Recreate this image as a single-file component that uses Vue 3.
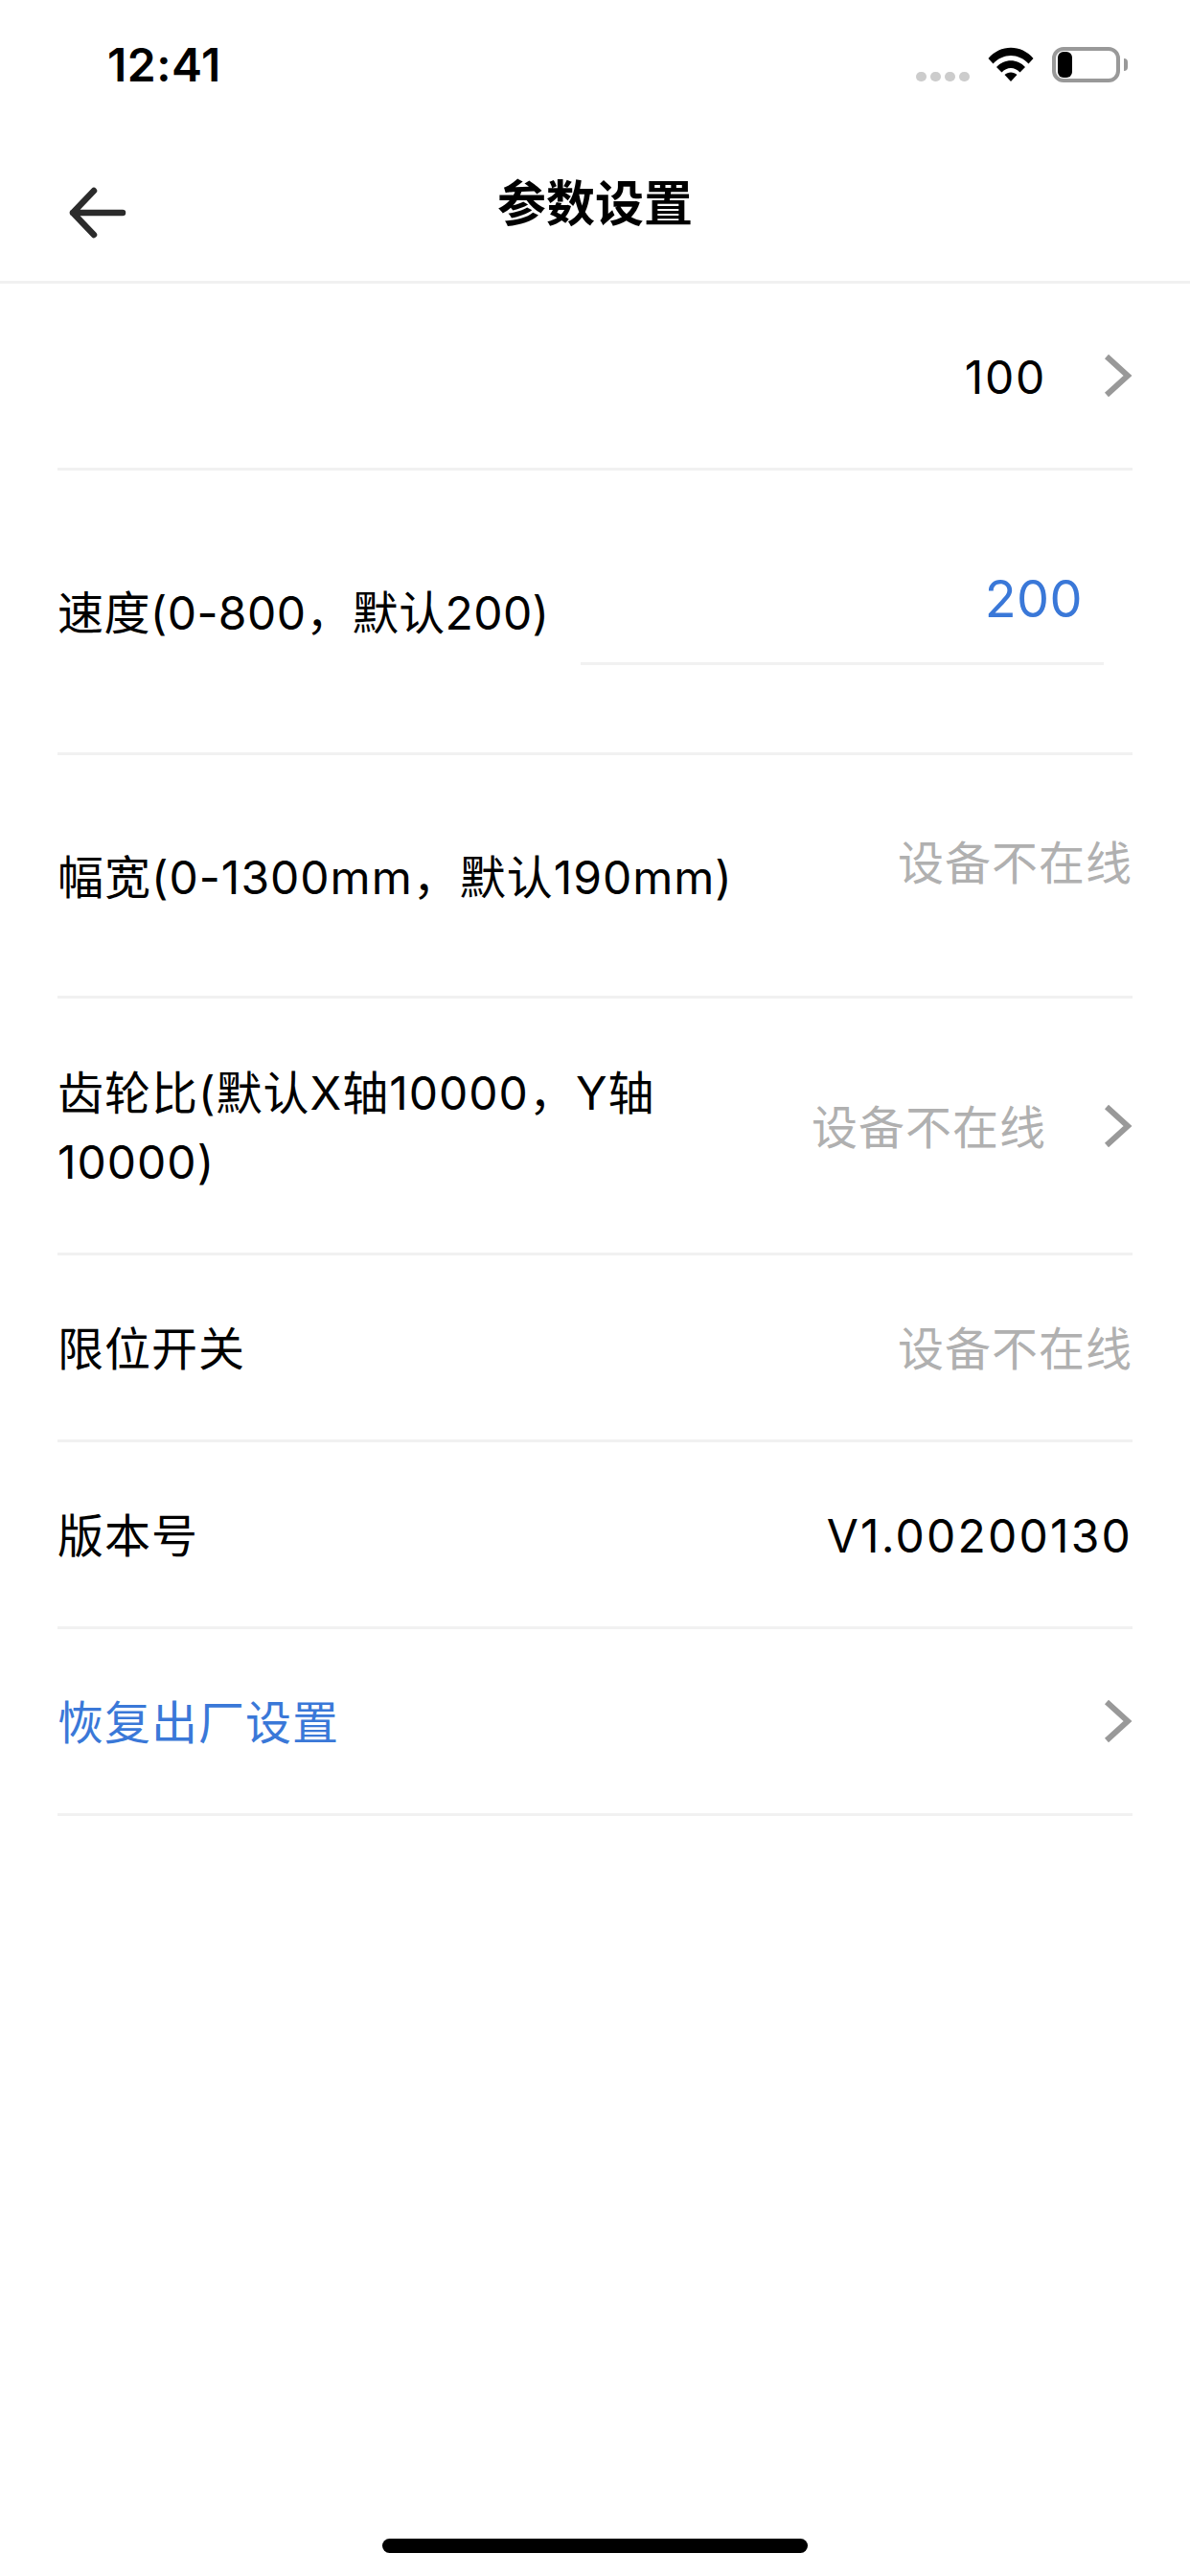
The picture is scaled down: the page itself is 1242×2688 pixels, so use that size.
<template>
  <div class="page">
    <div class="status">
      <span class="time">12:41</span>
      <div class="status-icons">
        <div class="dots"><i></i><i></i><i></i><i></i></div>
        <svg class="wifi" width="48" height="36" viewBox="0 0 48 36">
          <path d="M0.5 12 C 13 -3, 35 -3, 47.5 12 L 42.5 17.5 C 32 6, 16 6, 5.5 17.5 Z" fill="#000" />
          <path d="M9 21 C 17 12, 31 12, 39 21 L 33.5 26.5 C 28 20.5, 20 20.5, 14.5 26.5 Z" fill="#000" />
          <path d="M17.5 29 C 21 25.5, 27 25.5, 30.5 29 L 24 36 Z" fill="#000" />
        </svg>
        <div class="battery"><div class="battery-fill"></div></div>
        <div class="battery-nub"></div>
      </div>
    </div>

    <div class="nav">
      <svg class="back" width="64" height="64" viewBox="0 0 64 64">
        <path d="M28 9 L6 32 L28 55 M6 32 H58" fill="none" stroke="#2b2b2b" stroke-width="6.5" stroke-linecap="round" stroke-linejoin="round" />
      </svg>
      <span class="title">参数设置</span>
    </div>

    <div class="list">
      <div v-for="row in rows" :key="row.id" class="row" :class="row.id">
        <div v-if="row.label" class="label" :class="{ link: row.link }">{{ row.label }}</div>
        <div v-if="row.input" class="input-box"><span>{{ row.input }}</span></div>
        <div v-if="row.value" class="value" :class="{ off: row.off, raised: row.raised }">{{ row.value }}</div>
        <svg v-if="row.arrow" class="chevron" width="30" height="48" viewBox="0 0 30 48">
          <path d="M3 4 L25 24 L3 44" fill="none" stroke="#999" stroke-width="6" />
        </svg>
      </div>
    </div>

    <div class="home-bar"></div>
  </div>
</template>

<script setup>
const rows = [
  { id: 'r-accel', value: '100', arrow: true },
  { id: 'r-speed', label: '速度(0-800，默认200)', input: '200' },
  { id: 'r-width', label: '幅宽(0-1300mm，默认190mm)', value: '设备不在线', off: true, raised: true },
  { id: 'r-gear', label: '齿轮比(默认X轴10000，Y轴10000)', value: '设备不在线', off: true, arrow: true },
  { id: 'r-limit', label: '限位开关', value: '设备不在线', off: true },
  { id: 'r-version', label: '版本号', value: 'V1.00200130' },
  { id: 'r-reset', label: '恢复出厂设置', link: true, arrow: true }
]
</script>

<style>
html, body { margin: 0; background: #fff; }
</style>

<style scoped>
.page {
  width: 1242px;
  height: 2688px;
  background: #fff;
  display: flex;
  flex-direction: column;
  position: relative;
  overflow: hidden;
  font-family: Inter, "Noto Sans CJK SC", sans-serif;
  color: #000;
}
.status {
  height: 132px;
  display: flex;
  align-items: flex-start;
  justify-content: space-between;
  padding: 0 65px 0 112px;
}
.time {
  font-size: 48px;
  font-weight: 600;
  line-height: 56px;
  letter-spacing: 0.5px;
  margin-top: 40px;
}
.status-icons {
  display: flex;
  align-items: flex-end;
  margin-top: 49px;
  height: 37px;
}
.dots { display: flex; gap: 4px; margin-right: 19px; margin-bottom: 1px; }
.dots i { width: 11px; height: 10px; border-radius: 5px; background: #ccc; }
.wifi { margin-right: 19px; margin-bottom: 1px; }
.battery {
  width: 71px;
  height: 37px;
  box-sizing: border-box;
  border: 4px solid #999;
  border-radius: 12px;
  padding: 1px 0 0 2px;
}
.battery-fill { width: 15px; height: 27px; background: #000; border-radius: 6px; }
.battery-nub {
  width: 4px;
  height: 13px;
  background: #999;
  border-radius: 0 6px 6px 0;
  margin: 0 0 12px 4px;
}
.nav {
  height: 161px;
  border-bottom: 3px solid #f1f1f1;
  display: flex;
  align-items: center;
  justify-content: center;
  position: relative;
}
.back { position: absolute; left: 70px; top: 58px; }
.title {
  font-size: 51px;
  font-weight: 700;
  line-height: 72px;
}
.list {
  padding: 0 60px;
  display: flex;
  flex-direction: column;
}
.row {
  display: flex;
  align-items: center;
  justify-content: space-between;
  border-bottom: 3px solid #f1f1f1;
  box-sizing: border-box;
  font-size: 48px;
  line-height: 72px;
  letter-spacing: 1px;
}
.label, .value { padding-top: 4px; }
.r-accel { height: 195px; justify-content: flex-end; letter-spacing: 1.7px; }
.r-speed { height: 297px; letter-spacing: 0.4px; }
.r-width { height: 254px; }
.r-gear { height: 268px; }
.r-gear .label { max-width: 700px; }
.r-limit, .r-reset { height: 195px; }
.r-version { height: 195px; }
.r-version .value { letter-spacing: 2.2px; }
.link { color: #3a78d8; }
.value { margin-left: auto; }
.off { color: #b0b0b0; }
.raised { margin-bottom: 30px; }
.chevron { margin-left: 60px; flex-shrink: 0; }
.input-box {
  width: 546px;
  height: 142px;
  margin: 0 30px 30px auto;
  padding: 6px 22px 0 0;
  box-sizing: border-box;
  border-bottom: 3px solid #f1f1f1;
  display: flex;
  align-items: center;
  justify-content: flex-end;
  color: #3a78d8;
  font-size: 54px;
}
.home-bar {
  position: absolute;
  left: 399px;
  top: 2649px;
  width: 444px;
  height: 15px;
  border-radius: 8px;
  background: #000;
}
</style>
